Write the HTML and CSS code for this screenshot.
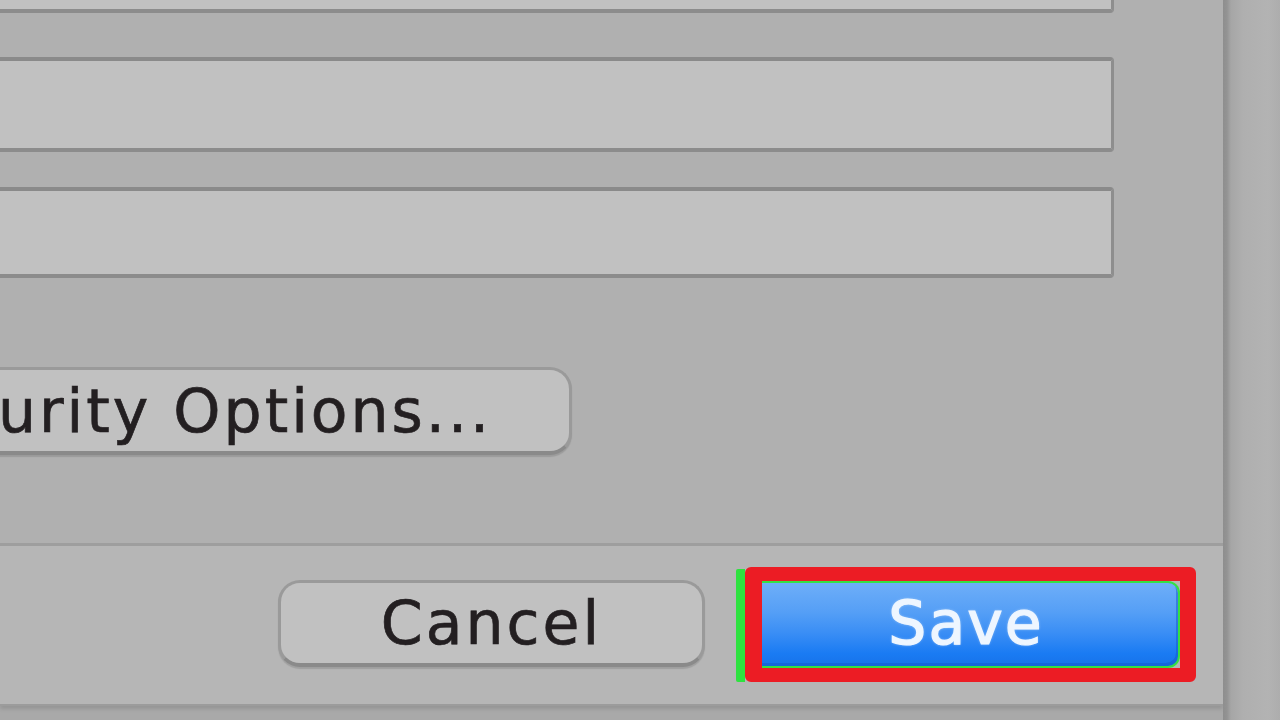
FILE: index.html
```html
<!DOCTYPE html>
<html>
<head>
<meta charset="utf-8">
<link rel="stylesheet" href="styles.css">
</head>
<body>
<div class="stage">
  <div class="dialog">
    <div class="content">
      <div class="field field-first"></div>
      <div class="field field-second"></div>
      <div class="field field-third"></div>
      <button class="btn btn-security">Security Options...</button>
    </div>
    <div class="footer">
      <button class="btn btn-cancel">Cancel</button>
      <div class="mark">
        <div class="mark-red">
          <button class="btn-save">Save</button>
        </div>
      </div>
    </div>
  </div>
  <div class="side"></div>
</div>
</body>
</html>
```

FILE: styles.css
```css
html, body {
  margin: 0;
  padding: 0;
  width: 1280px;
  height: 720px;
  overflow: hidden;
  background: #a9a9a9;
  font-family: "DejaVu Sans", "Liberation Sans", sans-serif;
}

.stage {
  display: flex;
  width: 1280px;
  height: 720px;
  align-items: flex-start;
}

.dialog {
  width: 1223px;
  height: 704px;
  flex: none;
  display: flex;
  flex-direction: column;
  background: #b0b0b0;
  box-shadow: 0 2px 0 #9c9c9c, 0 5px 4px rgba(0, 0, 0, 0.12);
  overflow: hidden;
}

.content {
  height: 543px;
  flex: none;
  display: flex;
  flex-direction: column;
  align-items: flex-start;
}

.field {
  box-sizing: border-box;
  width: 1134px;
  margin-left: -20px;
  background: #c1c1c1;
  border: 3px solid #8e8e8e;
  border-top: 4px solid #8a8a8a;
  border-bottom: 4px solid #8c8c8c;
  border-radius: 4px;
  flex: none;
}

.field-first {
  height: 90px;
  margin-top: -77px;
}

.field-second {
  height: 95px;
  margin-top: 44px;
}

.field-third {
  height: 91px;
  margin-top: 35px;
}

.btn {
  font-family: "DejaVu Sans", "Liberation Sans", sans-serif;
  font-size: 60px;
  letter-spacing: 3px;
  color: #231f21;
  -webkit-text-stroke: 0.7px #231f21;
  background: #c1c1c1;
  border: 3px solid #9a9a9a;
  border-bottom: 4px solid #8a8a8a;
  border-radius: 22px;
  box-shadow: 0 2px 1px rgba(0, 0, 0, 0.12);
  padding: 0;
  box-sizing: border-box;
  display: flex;
  align-items: center;
  justify-content: center;
}

.btn-security {
  margin-top: 89px;
  margin-left: -205px;
  width: 777px;
  height: 88px;
  padding-left: 6px;
}

.footer {
  flex: 1;
  border-top: 3px solid #9e9e9e;
  background: #b6b6b6;
  display: flex;
  align-items: center;
  justify-content: flex-end;
  padding-right: 27px;
  padding-bottom: 1px;
}

.btn-cancel {
  width: 427px;
  height: 87px;
  margin-right: 31px;
  margin-top: -2px;
}

.mark {
  border-left: 9px solid #2ee23f;
  border-radius: 2px;
  padding: 1px 0 3px 0;
  margin-top: 1px;
}

.mark-red {
  box-sizing: border-box;
  width: 451px;
  height: 115px;
  border: 14px solid #ec1c24;
  border-left-width: 17px;
  border-right-width: 16px;
  border-radius: 6px;
  margin-top: -3px;
  margin-bottom: -3px;
}

.btn-save {
  box-sizing: border-box;
  width: 100%;
  height: 100%;
  display: flex;
  align-items: center;
  justify-content: center;
  padding: 0 8px 2px 0;
  border: 2px solid #35e042;
  border-left: 0;
  border-radius: 0 12px 12px 0;
  background: linear-gradient(to bottom, #6eaef8 0%, #559ff6 35%, #3a8ef5 60%, #1a7bf3 85%, #1673ea 100%);
  box-shadow: inset -2px -3px 0 rgba(20, 90, 200, 0.5);
  font-family: "DejaVu Sans", "Liberation Sans", sans-serif;
  font-size: 60px;
  letter-spacing: 2px;
  color: #eef6ff;
  -webkit-text-stroke: 1.2px #eef6ff;
  text-shadow: 0 0 3px rgba(255, 255, 255, 0.6);
}

.side {
  flex: 1;
  height: 720px;
  background: linear-gradient(to right, #8e8e8e 0px, #939393 4px, #a6a6a6 8px, #afafaf 20px, #b3b3b3 45px, #adadad 57px);
}
```
